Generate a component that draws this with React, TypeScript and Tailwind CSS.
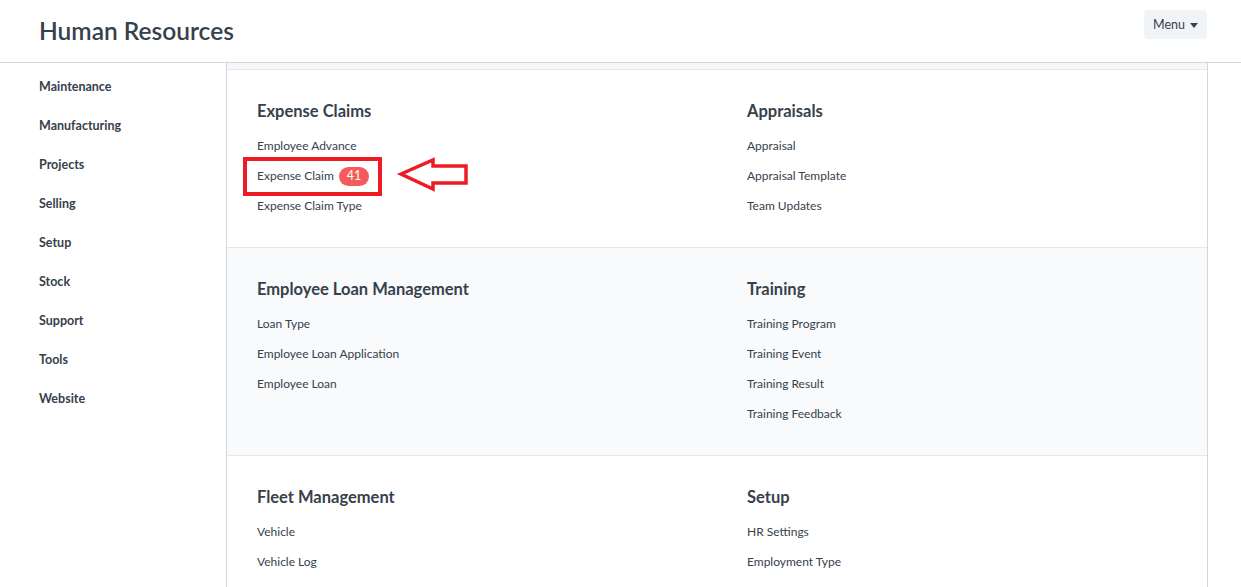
import React from "react";

type Section = {
  left: { title: string; links: { label: string; badge?: number }[] };
  right: { title: string; links: { label: string; badge?: number }[] };
  shaded?: boolean;
};

const modules = [
  "Maintenance",
  "Manufacturing",
  "Projects",
  "Selling",
  "Setup",
  "Stock",
  "Support",
  "Tools",
  "Website",
];

const sections: Section[] = [
  {
    left: {
      title: "Expense Claims",
      links: [
        { label: "Employee Advance" },
        { label: "Expense Claim", badge: 41 },
        { label: "Expense Claim Type" },
      ],
    },
    right: {
      title: "Appraisals",
      links: [{ label: "Appraisal" }, { label: "Appraisal Template" }, { label: "Team Updates" }],
    },
  },
  {
    shaded: true,
    left: {
      title: "Employee Loan Management",
      links: [{ label: "Loan Type" }, { label: "Employee Loan Application" }, { label: "Employee Loan" }],
    },
    right: {
      title: "Training",
      links: [
        { label: "Training Program" },
        { label: "Training Event" },
        { label: "Training Result" },
        { label: "Training Feedback" },
      ],
    },
  },
  {
    left: {
      title: "Fleet Management",
      links: [{ label: "Vehicle" }, { label: "Vehicle Log" }],
    },
    right: {
      title: "Setup",
      links: [{ label: "HR Settings" }, { label: "Employment Type" }],
    },
  },
];

function Column({ col }: { col: Section["left"] }) {
  return (
    <div>
      <h3 className="text-[16.5px] font-bold leading-[24px] mb-[8px]">{col.title}</h3>
      {col.links.map((l) => (
        <div key={l.label} className="h-[30px] flex items-center text-[12px]">
          <span>{l.label}</span>
          {l.badge && (
            <span className="ml-[5px] h-[19px] px-[8px] rounded-full bg-[#f45b5b] text-white text-[12.5px] flex items-center">
              {l.badge}
            </span>
          )}
        </div>
      ))}
    </div>
  );
}

export default function App() {
  return (
    <div
      className="relative w-[1241px] h-[587px] overflow-hidden bg-white text-[#36414c]"
      style={{ fontFamily: 'Lato, "Noto Sans", sans-serif' }}
    >
      <div className="h-[63px] border-b border-[#d1d8dd] flex items-center justify-between pl-[39px] pr-[34px]">
        <h1 className="text-[24.5px] font-semibold leading-none mt-[1px]">Human Resources</h1>
        <button className="h-[29px] px-[9px] pt-[2px] rounded-[4px] bg-[#f0f4f7] text-[12.5px] flex items-center gap-[5px] mb-[13px]">
          Menu
          <svg width="8" height="5" viewBox="0 0 8 5">
            <path d="M0 0h8L4 5z" fill="#36414c" />
          </svg>
        </button>
      </div>

      <div className="flex">
        <div className="w-[226px] pt-[5px] pl-[39px]">
          {modules.map((m) => (
            <div key={m} className="h-[39px] flex items-center text-[12.5px] font-bold">
              {m}
            </div>
          ))}
        </div>

        <div className="w-[982px] border-l border-r border-[#d1d8dd]">
          <div className="h-[7px] bg-[#f5f7fa] border-b border-[#e3e8ec]" />
          {sections.map((s, i) => (
            <div
              key={i}
              className={`grid grid-cols-[490px_1fr] px-[30px] pt-[29px] pb-[26px] ${
                s.shaded ? "bg-[#f9fafb]" : "bg-white"
              } ${i < sections.length - 1 ? "border-b border-[#e3e8ec]" : ""}`}
            >
              <Column col={s.left} />
              <Column col={s.right} />
            </div>
          ))}
        </div>
      </div>

      {/* annotation */}
      <div className="absolute left-[243px] top-[157px] w-[139px] h-[39px] border-[4px] border-[#ed1c24]" />
      <svg className="absolute left-[396px] top-[156px]" width="76" height="38" viewBox="0 0 76 38">
        <path
          d="M5 18 L37 4 L37 10 L70 10 L70 27 L37 27 L37 33 Z"
          fill="none"
          stroke="#ed1c24"
          strokeWidth="3.5"
          strokeLinejoin="miter"
        />
      </svg>
    </div>
  );
}
